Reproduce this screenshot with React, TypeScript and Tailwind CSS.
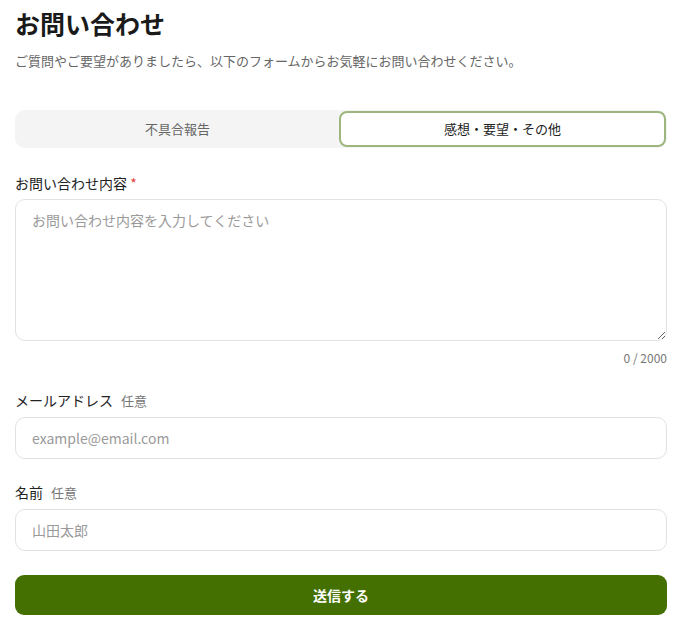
import React from "react";

export default function App() {
  return (
    <div
      className="w-[687px] min-h-[633px] bg-white text-[#222]"
      style={{ fontFamily: '"Noto Sans CJK JP", "Noto Sans", sans-serif' }}
    >
      <div className="pl-[15px] pr-[20px] pt-[4px]">
        <h1 className="text-[25px] font-bold leading-[38px] text-[#1a1a1a]">お問い合わせ</h1>
        <p className="mt-[9px] text-[13px] leading-[20px] text-[#666]">
          ご質問やご要望がありましたら、以下のフォームからお気軽にお問い合わせください。
        </p>

        <div className="mt-[39px] flex h-[38px] rounded-[10px] bg-[#f4f4f4] p-[1px]">
          <button className="flex-1 text-[13px] text-[#666]">不具合報告</button>
          <button className="flex-1 rounded-[8px] border-2 border-[#9db67e] bg-white text-[13px] text-[#222]">
            感想・要望・その他
          </button>
        </div>

        <div className="mt-[25px]">
          <label className="block text-[14px] leading-[20px] text-[#222]">
            お問い合わせ内容 <span className="text-[#e53e3e]">*</span>
          </label>
          <textarea
            className="mt-[6px] block h-[142px] w-full resize-y rounded-[10px] border border-[#e2e2e2] px-[16px] py-[9px] text-[14px] leading-[22px] outline-none placeholder:text-[#9a9a9a]"
            placeholder="お問い合わせ内容を入力してください"
          />
          <div className="mt-[8px] text-right text-[12px] leading-[18px] text-[#777]">0 / 2000</div>
        </div>

        <div className="mt-[23px]">
          <label className="block text-[14px] leading-[20px] text-[#222]">
            メールアドレス<span className="ml-[8px] text-[13px] text-[#777]">任意</span>
          </label>
          <input
            className="mt-[6px] block h-[42px] w-full rounded-[10px] border border-[#e2e2e2] px-[16px] text-[14px] outline-none placeholder:text-[#9a9a9a]"
            placeholder="example@email.com"
          />
        </div>

        <div className="mt-[23px]">
          <label className="block text-[14px] leading-[20px] text-[#222]">
            名前<span className="ml-[8px] text-[13px] text-[#777]">任意</span>
          </label>
          <input
            className="mt-[6px] block h-[42px] w-full rounded-[10px] border border-[#e2e2e2] px-[16px] text-[14px] outline-none placeholder:text-[#9a9a9a]"
            placeholder="山田太郎"
          />
        </div>

        <button className="mt-[24px] block h-[40px] w-full rounded-[9px] bg-[#437000] text-[14px] font-bold text-white">
          送信する
        </button>
      </div>
    </div>
  );
}
